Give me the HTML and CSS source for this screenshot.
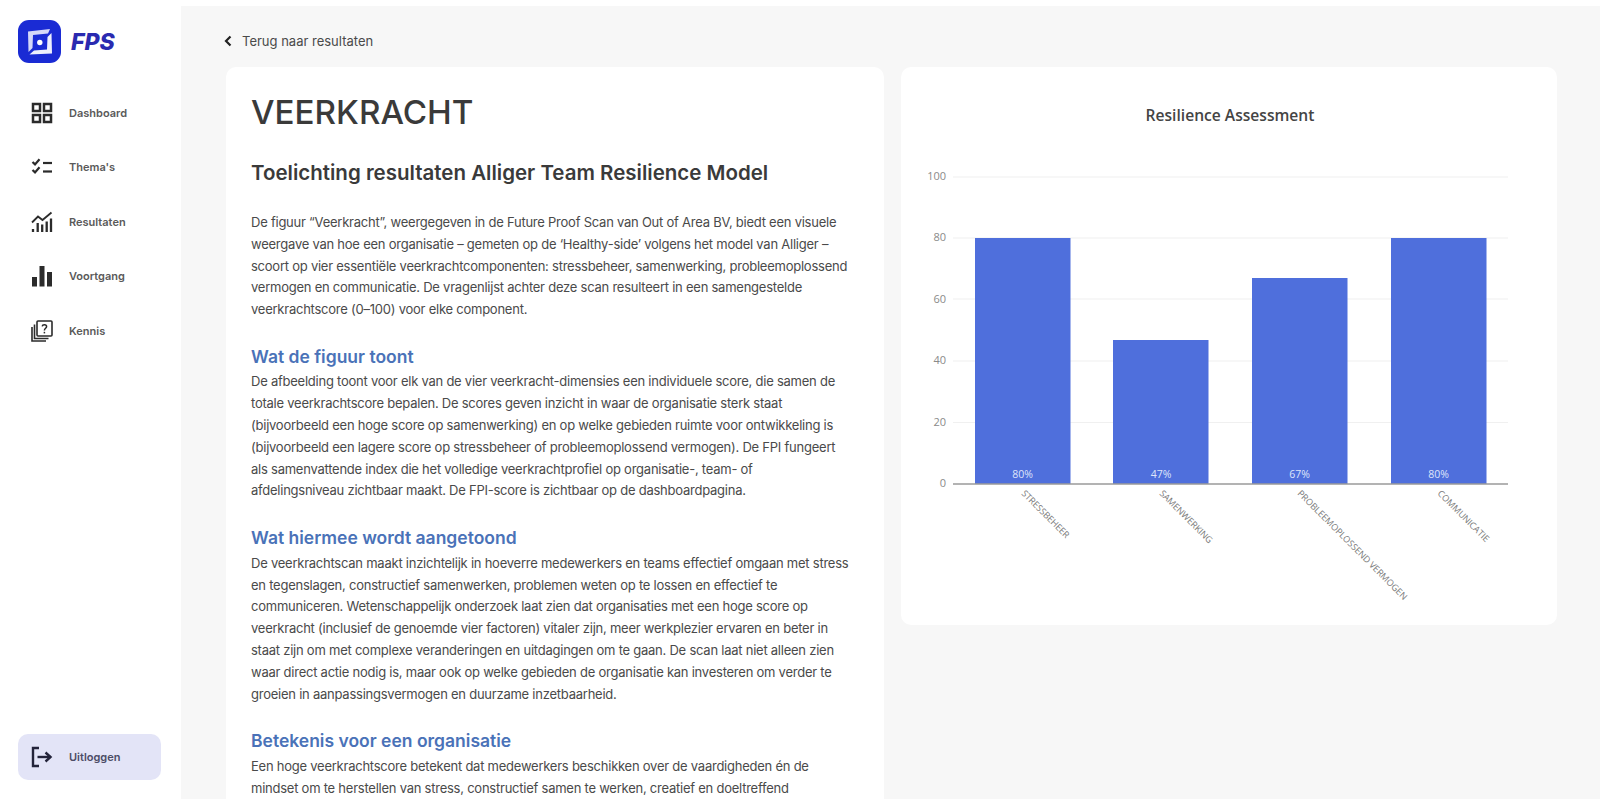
FILE: index.html
```html
<!DOCTYPE html>
<html>
    <head>
        <title>FPS - Veerkracht</title>
        <meta charset="utf-8">
        <link rel="stylesheet" href="styles.css">
    </head>
    <body>
        <div class="fps-container">

            <div class="fps-sidebar">
                <div class="fps-logo">
                    <svg class="fps-logo-mark" viewBox="0 0 43 43">
                        <rect width="43" height="43" rx="11" fill="#1a2bd4"/>
                        <path d="M10 11.500 L32 9 L30 13.500 L15 15 L14.500 28 L10.500 32 Z" fill="#d5d8f8"/>
                        <path d="M33.500 13 L34 33.500 L11.500 34.500 L16 30.500 L29 29.500 L29.500 17 Z" fill="#eef0fd"/>
                        <circle cx="21.800" cy="22.500" r="2.700" fill="#fff"/>
                    </svg>
                    <span class="fps-logo-text">FPS</span>
                </div>

                <div class="fps-nav">
                    <a class="fps-nav-item">
                        <svg class="fps-icon" viewBox="0 0 22 22" fill="none" stroke="#2b2b2b" stroke-width="2.500">
                            <rect x="2" y="2" width="7" height="7"/>
                            <rect x="13" y="2" width="7" height="7"/>
                            <rect x="2" y="13" width="7" height="7"/>
                            <rect x="13" y="13" width="7" height="7"/>
                        </svg>
                        Dashboard
                    </a>
                    <a class="fps-nav-item">
                        <svg class="fps-icon" viewBox="0 0 22 22" fill="none" stroke="#2b2b2b" stroke-width="2.200">
                            <path d="M1.500 6 L4 8.400 L8.500 3.200"/>
                            <path d="M1.500 14 L4 16.400 L8.500 11.200"/>
                            <path d="M12 7 H21"/>
                            <path d="M12 15.500 H21"/>
                        </svg>
                        Thema's
                    </a>
                    <a class="fps-nav-item">
                        <svg class="fps-icon" viewBox="0 0 22 22" fill="none" stroke="#2b2b2b">
                            <path d="M1 11.500 L7 5.500 L11.500 9 L20.500 1.500" stroke-width="1.800"/>
                            <path d="M2 21 V18 M6.700 21 V12 M11.200 21 V13.500 M15.700 21 V10.500 M20 21 V7.500" stroke-width="2.300"/>
                        </svg>
                        Resultaten
                    </a>
                    <a class="fps-nav-item">
                        <svg class="fps-icon" viewBox="0 0 22 22" fill="#2b2b2b">
                            <rect x="1" y="12" width="5" height="9.500"/>
                            <rect x="8.500" y="1" width="5" height="20.500"/>
                            <rect x="16" y="7" width="5" height="14.500"/>
                        </svg>
                        Voortgang
                    </a>
                    <a class="fps-nav-item">
                        <svg class="fps-icon" viewBox="0 0 22 22" fill="none" stroke="#2b2b2b" stroke-width="1.600">
                            <rect x="6" y="1" width="15" height="15" rx="1"/>
                            <path d="M3.500 4.500 V18.500 H17.500"/>
                            <path d="M1 7 V21 H15"/>
                            <path d="M11.200 6.400 C11.400 4.200 15.600 4.200 15.600 6.600 C15.600 8.400 13.400 8.200 13.400 10.400" stroke-width="1.500"/>
                            <path d="M13.400 11.800 V13.400" stroke-width="1.500"/>
                        </svg>
                        Kennis
                    </a>
                </div>

                <a class="fps-logout">
                    <svg class="fps-icon" viewBox="0 0 22 22" fill="none" stroke="#23233a" stroke-width="2.400">
                        <path d="M8 2 H2 V20 H8"/>
                        <path d="M6.500 11 H19.500"/>
                        <path d="M14.500 6.500 L19.500 11 L14.500 15.500"/>
                    </svg>
                    Uitloggen
                </a>
            </div>

            <div class="fps-main">
                <a class="fps-back">
                    <svg class="fps-chevron" viewBox="0 0 8 12" fill="none" stroke="#222" stroke-width="2.200">
                        <path d="M6.500 1.500 L2 6 L6.500 10.500"/>
                    </svg>
                    Terug naar resultaten
                </a>

                <div class="fps-columns">
                    <div class="fps-card fps-article">
                        <h1>VEERKRACHT</h1>
                        <h2>Toelichting resultaten Alliger Team Resilience Model</h2>
                        <p class="fps-intro">
                            De figuur “Veerkracht”, weergegeven in de Future Proof Scan van Out of Area BV, biedt een visuele<br>
                            weergave van hoe een organisatie – gemeten op de ‘Healthy-side’ volgens het model van Alliger –<br>
                            scoort op vier essentiële veerkrachtcomponenten: stressbeheer, samenwerking, probleemoplossend<br>
                            vermogen en communicatie. De vragenlijst achter deze scan resulteert in een samengestelde<br>
                            veerkrachtscore (0–100) voor elke component.
                        </p>
                        <h3>Wat de figuur toont</h3>
                        <p>
                            De afbeelding toont voor elk van de vier veerkracht-dimensies een individuele score, die samen de<br>
                            totale veerkrachtscore bepalen. De scores geven inzicht in waar de organisatie sterk staat<br>
                            (bijvoorbeeld een hoge score op samenwerking) en op welke gebieden ruimte voor ontwikkeling is<br>
                            (bijvoorbeeld een lagere score op stressbeheer of probleemoplossend vermogen). De FPI fungeert<br>
                            als samenvattende index die het volledige veerkrachtprofiel op organisatie-, team- of<br>
                            afdelingsniveau zichtbaar maakt. De FPI-score is zichtbaar op de dashboardpagina.
                        </p>
                        <h3>Wat hiermee wordt aangetoond</h3>
                        <p>
                            De veerkrachtscan maakt inzichtelijk in hoeverre medewerkers en teams effectief omgaan met stress<br>
                            en tegenslagen, constructief samenwerken, problemen weten op te lossen en effectief te<br>
                            communiceren. Wetenschappelijk onderzoek laat zien dat organisaties met een hoge score op<br>
                            veerkracht (inclusief de genoemde vier factoren) vitaler zijn, meer werkplezier ervaren en beter in<br>
                            staat zijn om met complexe veranderingen en uitdagingen om te gaan. De scan laat niet alleen zien<br>
                            waar direct actie nodig is, maar ook op welke gebieden de organisatie kan investeren om verder te<br>
                            groeien in aanpassingsvermogen en duurzame inzetbaarheid.
                        </p>
                        <h3>Betekenis voor een organisatie</h3>
                        <p>
                            Een hoge veerkrachtscore betekent dat medewerkers beschikken over de vaardigheden én de<br>
                            mindset om te herstellen van stress, constructief samen te werken, creatief en doeltreffend
                        </p>
                    </div>

                    <div class="fps-card fps-chart">
                        <svg viewBox="901 67 656 558" width="656" height="558">
                            <text class="chart-title" x="1230" y="121" text-anchor="middle">Resilience Assessment</text>

                            <path class="chart-grid" d="M953 177 H1508 M953 238 H1508 M953 299 H1508 M953 361 H1508 M953 422.500 H1508"/>

                            <g class="chart-y" text-anchor="end">
                                <text x="946" y="180">100</text>
                                <text x="946" y="241">80</text>
                                <text x="946" y="303">60</text>
                                <text x="946" y="364">40</text>
                                <text x="946" y="426">20</text>
                                <text x="946" y="487">0</text>
                            </g>

                            <g fill="#4f6fdc">
                                <rect x="975" y="238" width="95.500" height="246"/>
                                <rect x="1113" y="340" width="95.500" height="144"/>
                                <rect x="1252" y="278" width="95.500" height="206"/>
                                <rect x="1391" y="238" width="95.500" height="246"/>
                            </g>

                            <path class="chart-axis" d="M953 484 H1508"/>

                            <g class="chart-val" text-anchor="middle">
                                <text x="1022.500" y="478">80%</text>
                                <text x="1161" y="478">47%</text>
                                <text x="1299.500" y="478">67%</text>
                                <text x="1438.500" y="478">80%</text>
                            </g>

                            <g class="chart-x">
                                <text transform="translate(1021 494) rotate(45)">STRESSBEHEER</text>
                                <text transform="translate(1159 494) rotate(45)">SAMENWERKING</text>
                                <text transform="translate(1297 494) rotate(45)">PROBLEEMOPLOSSEND VERMOGEN</text>
                                <text transform="translate(1437 494) rotate(45)">COMMUNICATIE</text>
                            </g>
                        </svg>
                    </div>
                </div>
            </div>

        </div>
    </body>
</html>
```

FILE: styles.css
```css
* {
    box-sizing: border-box;
}
html, body {
    margin: 0;
    height: 100%;
    overflow: hidden;
}
body {
    background-color: #fff;
    font-family: "Inter", "Noto Sans", sans-serif;
    color: #4a4a4a;
}
.fps-container {
    display: flex;
    height: 799px;
}

/* sidebar */
.fps-sidebar {
    width: 181px;
    flex: none;
    display: flex;
    flex-direction: column;
    padding: 20px 20px 19px 18px;
}
.fps-logo {
    display: flex;
    align-items: center;
    gap: 10px;
}
.fps-logo-mark {
    width: 43px;
    height: 43px;
}
.fps-logo-text {
    font-style: italic;
    font-weight: 800;
    font-size: 23px;
    color: #2a2ab0;
}
.fps-nav {
    display: flex;
    flex-direction: column;
    gap: 32.400px;
    margin-top: 39px;
    padding-left: 13px;
}
.fps-nav-item {
    display: flex;
    align-items: center;
    gap: 16px;
    height: 22px;
    font-size: 11px;
    font-weight: 600;
    color: #5a5a5a;
}
.fps-icon {
    width: 22px;
    height: 22px;
    flex: none;
}
.fps-logout {
    display: flex;
    align-items: center;
    gap: 16px;
    margin-top: auto;
    height: 46px;
    padding-left: 13px;
    border-radius: 10px;
    background-color: #e3e4f7;
    font-size: 11px;
    font-weight: 600;
    color: #4c4c66;
}

/* main */
.fps-main {
    flex: 1;
    margin-top: 6px;
    padding: 0 43px 0 43px;
    background-color: #f7f7f7;
    overflow: hidden;
}
.fps-back {
    display: flex;
    align-items: center;
    gap: 10px;
    height: 61px;
    padding-top: 9px;
    font-size: 13px;
    color: #4a4a4a;
}
.fps-chevron {
    width: 8px;
    height: 12px;
}
.fps-columns {
    display: flex;
    align-items: flex-start;
    gap: 17px;
    margin-left: 2px;
}
.fps-card {
    background-color: #fff;
    border-radius: 10px;
}
.fps-article {
    width: 658px;
    flex: none;
    padding: 23px 25px 30px;
    white-space: nowrap;
}
.fps-chart {
    width: 656px;
    height: 558px;
    flex: none;
}
.fps-chart svg {
    display: block;
}

/* article text */
h1 {
    margin: 0;
    font-size: 33.200px;
    line-height: 44px;
    font-weight: 500;
    color: #3a3a3a;
}
h2 {
    margin: 25px 0 0;
    font-size: 20.500px;
    line-height: 28px;
    font-weight: 600;
    color: #3a3a3a;
}
h3 {
    margin: 0 0 2.500px;
    font-size: 17.500px;
    line-height: 24px;
    font-weight: 600;
    color: #4a72b8;
}
p {
    margin: 0 0 24px;
    font-size: 13px;
    letter-spacing: -0.240px;
    line-height: 21.800px;
    color: #4a4a4a;
}
.fps-intro {
    margin-top: 25px;
    margin-bottom: 24px;
}

/* chart */
.fps-chart text {
    font-family: "Open Sans", sans-serif;
}
.chart-title {
    font-size: 15.600px;
    font-weight: 600;
    fill: #444;
}
.chart-grid {
    stroke: #f0f0f0;
    stroke-width: 1.200;
    fill: none;
}
.chart-axis {
    stroke: #9a9a9a;
    stroke-width: 1.400;
    fill: none;
}
.chart-y text {
    font-size: 11px;
    fill: #8a8a8a;
}
.chart-val text {
    font-size: 10.500px;
    fill: #dfe5fa;
}
.chart-x text {
    font-size: 9px;
    fill: #7a7a7a;
}
```
